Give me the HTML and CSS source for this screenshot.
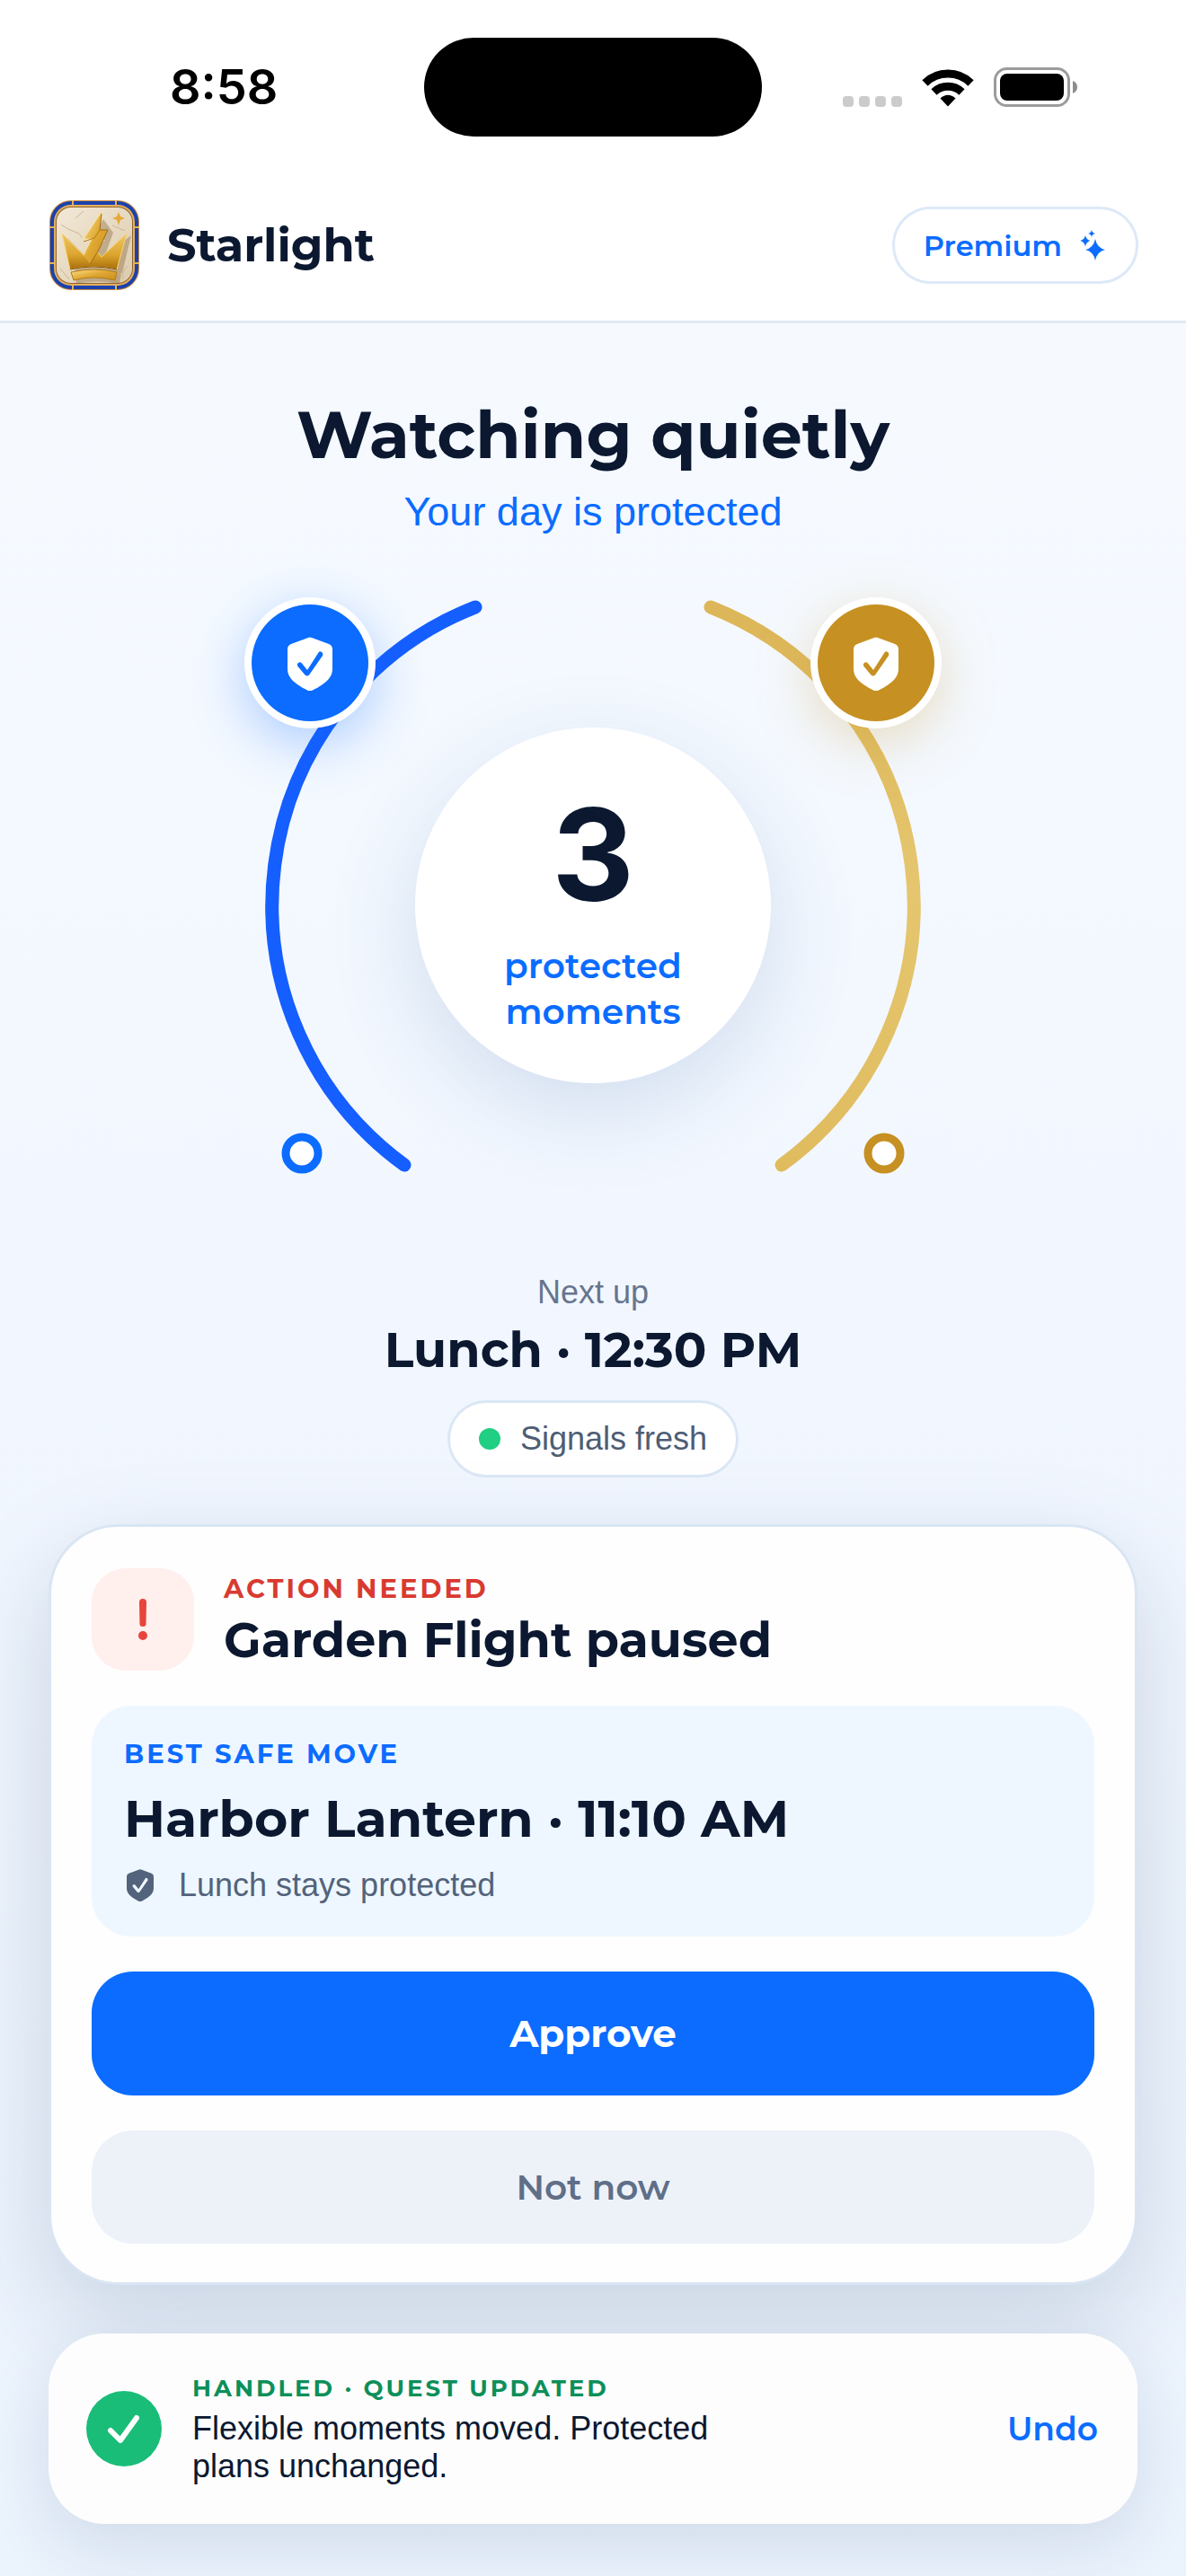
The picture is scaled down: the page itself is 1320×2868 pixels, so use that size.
FILE: index.html
```html
<!DOCTYPE html>
<html lang="en">

<head>
    <meta charset="utf-8">
    <meta name="viewport" content="width=device-width, initial-scale=1">
    <title>Starlight</title>
    <link rel="stylesheet" href="styles.css">
</head>

<body>
    <svg class="sprite" aria-hidden="true">
        <symbol id="shield" viewBox="0 0 50 60">
            <path fill="currentColor" fill-rule="evenodd" d="M23 1q2-1 4 0l19 7q4 1.500 4 6v22c0 11-11 18-23 24q-2 1-4 0C11 54 0 47 0 36V14q0-4.500 4-6z M38 17q-2-1.500-3.500.5L22 37l-6-7.500q-2-2-4-.5t-.5 4l8 9.500q2.500 2 4.500 0L39 21q1-2.500-1-4z" />
        </symbol>
    </svg>

    <div class="status">
        <span class="time">8:58</span>
        <span class="island"></span>
        <div class="signals">
            <svg class="dots" width="66" height="12" viewBox="0 0 66 12" fill="#cbcbcb">
                <rect width="12" height="12" rx="4" />
                <rect x="18" width="12" height="12" rx="4" />
                <rect x="36" width="12" height="12" rx="4" />
                <rect x="54" width="12" height="12" rx="4" />
            </svg>
            <svg width="58" height="43" viewBox="0 0 58 43">
                <path d="M3.500 16.500a36.500 36.500 0 0 1 51 0M13.500 26.500a22.500 22.500 0 0 1 31 0" fill="none" stroke="#000" stroke-width="9" />
                <path d="M29 42.500 20.500 33.500q8.500-7.500 17 0z" />
            </svg>
            <svg width="94" height="44" viewBox="0 0 94 44">
                <rect x="1.500" y="1.500" width="82" height="41" rx="13" fill="none" stroke="#9b9b9b" stroke-width="3" />
                <rect x="7" y="7" width="71" height="30" rx="8" />
                <path d="M88 15q5 2 5 7t-5 7z" fill="#8c8c8c" />
            </svg>
        </div>
    </div>

    <header class="header">
        <svg class="logo" viewBox="0 0 100 100">
            <defs>
                <linearGradient id="gold" x1="0" y1="0" x2="1" y2="1">
                    <stop offset="0" stop-color="#fbe08a" />
                    <stop offset=".5" stop-color="#dfa832" />
                    <stop offset="1" stop-color="#c98c1e" />
                </linearGradient>
                <linearGradient id="crown" x1="0" y1="0" x2="0" y2="1">
                    <stop offset="0" stop-color="#efc765" />
                    <stop offset=".6" stop-color="#dba42c" />
                    <stop offset="1" stop-color="#a86d0b" />
                </linearGradient>
                <linearGradient id="stone" x1="0" y1="0" x2="1" y2="1">
                    <stop offset="0" stop-color="#f3e9d8" />
                    <stop offset="1" stop-color="#dccbad" />
                </linearGradient>
            </defs>
            <rect width="100" height="100" rx="24" fill="#c98d3c" />
            <rect x="1" y="1" width="98" height="98" rx="23" fill="#1b41ad" />
            <rect x="5" y="5" width="90" height="90" rx="19" fill="#e2b062" />
            <rect x="7" y="7" width="86" height="86" rx="17" fill="#94642a" />
            <rect x="8" y="8" width="84" height="84" rx="16" fill="url(#stone)" />
            <path d="M13 27q8 6 15 8t8 7M82 88q-2-9 5-15M12 76l10 12M38 12l-9 8M70 28l14 6" fill="none" stroke="#cbb693" />
            <path d="M26 0v5M74 0v5M26 95v5M74 95v5M0 30h5M0 70h5M95 30h5M95 70h5" stroke="#e3b25a" stroke-width="2" />
            <g fill="#7a5a2c" opacity=".35">
                <path d="m20 42 22 22 20-20-16 2 14-25 11 15-9 25 29-22-10 42q-25 6-52 0z" />
                <path d="M28 82q25-6 52 0l-2 11q-26-5-48 0z" />
            </g>
            <path d="M14 37 38 61l16-3 4 5 28-26-11 40q-26-6-52 0z" fill="url(#crown)" stroke="#f7d477" />
            <path d="M58 13 38 43h9l-9 18 7 10 9-14 11-24h-9z" fill="url(#gold)" />
            <path d="M58 13 38 43h9l-9 18" fill="none" stroke="#fae39b" />
            <path d="M58 15 56 33h9L54 57l-9 14" fill="none" stroke="#a06a10" />
            <path d="M38 46 50 42l6-9" fill="none" stroke="#b37b18" />
            <path d="M23 77q26-6 52 0" fill="none" stroke="#8a570a" />
            <path d="M24 80q26-6 51 0l-2 9q-24-6-46 0z" fill="url(#gold)" stroke="#b47a18" />
            <path d="m77 13 2 5 5 2-5 2-2 6-2-6-5-2 5-2z" fill="#e7a93a" />
        </svg>
        <span class="brand">Starlight</span>
        <button class="premium" type="button">Premium
            <svg width="28" height="34" viewBox="0 0 28 34" fill="currentColor">
                <path d="M17 10q2 10 11 12-9 2-11 12-2-10-11-12 9-2 11-12zM6 6q1 5 5.500 6Q7 13 6 18.500 5 13 0 12q5-1 6-6zM13 0q.6 3.500 4 4-3.400.5-4 4-.6-3.500-4-4 3.400-.5 4-4z" />
            </svg>
        </button>
    </header>

    <main class="main">
        <h1>Watching quietly</h1>
        <p class="subtitle">Your day is protected</p>

        <div class="orbit">
            <svg class="rings" viewBox="0 0 800 710">
                <defs>
                    <linearGradient id="arcGold" x1="0" y1="0" x2="0" y2="1">
                        <stop offset="0" stop-color="#dcb658" />
                        <stop offset=".5" stop-color="#e5c66f" />
                        <stop offset="1" stop-color="#e0bc5f" />
                    </linearGradient>
                </defs>
                <g fill="none" stroke-width="15" stroke-linecap="round">
                    <path d="M269 23A357 357 0 0 0 190 644" stroke="#155eff" />
                    <path d="M531 23A357 357 0 0 1 610 644" stroke="url(#arcGold)" />
                </g>
                <g class="badge blue">
                    <circle class="glow" cx="85" cy="85" r="73" />
                    <circle cx="85" cy="85" r="65" fill="currentColor" />
                    <use href="#shield" x="60" y="56" width="50" height="60" color="#fff" />
                    <circle class="stop" cx="76" cy="631" r="18" />
                </g>
                <g class="badge gold">
                    <circle class="glow" cx="715" cy="85" r="73" />
                    <circle cx="715" cy="85" r="65" fill="currentColor" />
                    <use href="#shield" x="690" y="56" width="50" height="60" color="#fff" />
                    <circle class="stop" cx="724" cy="631" r="18" />
                </g>
            </svg>
            <div class="count">
                <strong>3</strong>
                <span>protected<br>moments</span>
            </div>
        </div>

        <section class="next">
            <p class="next-label">Next up</p>
            <h2>Lunch · 12:30 PM</h2>
            <p class="fresh"><i></i>Signals fresh</p>
        </section>

        <section class="card">
            <div class="alert">
                <span class="alert-icon">
                    <svg width="12" height="46" viewBox="0 0 12 46" fill="currentColor">
                        <path d="M2 4q0-4 4-4t4 4l-.5 24q0 3-3.500 3t-3.500-3z" />
                        <circle cx="6" cy="41" r="5" />
                    </svg>
                </span>
                <div class="alert-text">
                    <p class="label red">ACTION NEEDED</p>
                    <h2>Garden Flight paused</h2>
                </div>
            </div>
            <div class="move">
                <p class="label">BEST SAFE MOVE</p>
                <h3>Harbor Lantern · 11:10 AM</h3>
                <p class="note"><svg width="30" height="36"><use href="#shield" /></svg>Lunch stays protected</p>
            </div>
            <button class="approve" type="button">Approve</button>
            <button class="later" type="button">Not now</button>
        </section>

        <section class="toast">
            <svg class="done" viewBox="0 0 84 84">
                <circle cx="42" cy="42" r="42" fill="#19bd78" />
                <path d="m27 44 11 11 18-25" fill="none" stroke="#fff" stroke-width="6" stroke-linecap="round" stroke-linejoin="round" />
            </svg>
            <div class="toast-text">
                <p class="label green">HANDLED · QUEST UPDATED</p>
                <p>Flexible moments moved. Protected plans unchanged.</p>
            </div>
            <button class="undo" type="button">Undo</button>
        </section>
    </main>
</body>

</html>
```

FILE: styles.css
```css
* {
    box-sizing: border-box;
}

body {
    margin: 0;
    min-height: 100vh;
    font-family: "Liberation Sans", Arial, sans-serif;
    font-size: 36px;
    line-height: 44px;
    color: #0b1830;
    background: linear-gradient(180deg, #f7fbff 0, #f2f7ff 50%, #ebf3fd 100%);
}

h1,
h2,
h3,
p {
    margin: 0;
}

button {
    border: 0;
    padding: 0;
    background: none;
    cursor: pointer;
}

h1,
h2,
h3,
button,
.brand,
.count,
.label {
    font-family: Montserrat, Inter, sans-serif;
    font-weight: 700;
}

svg {
    flex: none;
}

.sprite {
    display: none;
}

.status {
    display: grid;
    grid-template-columns: 1fr 376px 1fr;
    align-items: center;
    height: 190px;
    padding: 4px 120px 0;
    background: #fff;
}

.time {
    padding-left: 69px;
    font-family: Inter, sans-serif;
    font-size: 54px;
    font-weight: 600;
    color: #000;
}

.island {
    height: 110px;
    border-radius: 55px;
    background: #000;
}

.signals {
    display: flex;
    justify-content: flex-end;
    align-items: flex-end;
    gap: 22px;
}

.header {
    display: flex;
    align-items: center;
    padding: 33px 53px 34px 55px;
    background: #fff;
    border-bottom: 3px solid #e1e9f3;
}

.logo {
    width: 100px;
    height: 100px;
}

.brand {
    margin-left: 31px;
    font-size: 51px;
}

.premium {
    display: flex;
    align-items: center;
    gap: 20px;
    height: 86px;
    margin-left: auto;
    padding: 0 34px 0 32px;
    border: 3px solid #dde9f8;
    border-radius: 43px;
    font-size: 32px;
    font-weight: 600;
    color: #0b6cff;
}

.main {
    display: flex;
    flex-direction: column;
    align-items: center;
    padding: 78px 54px 50px;
}

h1 {
    font-size: 73px;
    line-height: 92px;
}

.subtitle {
    margin-top: 12px;
    font-size: 45px;
    line-height: 56px;
    color: #0b6cff;
}

/* rings and counter share one grid cell */
.orbit {
    display: grid;
    place-items: center;
    width: 100%;
    max-width: 800px;
    margin: 55px 0 54px;
}

.rings,
.count {
    grid-area: 1 / 1;
}

.rings {
    width: 100%;
    overflow: visible;
}

.badge.blue {
    color: #0b6cff;
}

.badge.gold {
    color: #c69022;
}

.glow {
    fill: #fff;
}

.blue .glow {
    filter: drop-shadow(0 16px 30px rgba(11, 108, 255, 0.32));
}

.gold .glow {
    filter: drop-shadow(0 16px 30px rgba(198, 144, 34, 0.28));
}

.stop {
    fill: #fff;
    stroke: currentColor;
    stroke-width: 9;
}

.count {
    display: flex;
    flex-direction: column;
    align-items: center;
    justify-content: center;
    gap: 39px;
    width: 396px;
    height: 396px;
    padding-top: 26px;
    border-radius: 50%;
    background: #fff;
    box-shadow: 0 30px 100px rgba(35, 85, 150, 0.16);
    text-align: center;
}

.count strong {
    font-family: Inter, sans-serif;
    font-size: 142px;
    font-weight: 700;
    line-height: 120px;
}

.count span {
    font-size: 39px;
    font-weight: 600;
    line-height: 51px;
    color: #0b6cff;
}

.next {
    display: flex;
    flex-direction: column;
    align-items: center;
}

.next-label {
    color: #66758d;
}

.next h2 {
    margin: 10px 0 24px;
    font-size: 54px;
    line-height: 64px;
}

.fresh {
    display: flex;
    align-items: center;
    gap: 22px;
    height: 86px;
    padding: 0 32px;
    border: 3px solid #dbe7f5;
    border-radius: 43px;
    background: #fff;
    color: #4e5d75;
}

.fresh i {
    width: 24px;
    height: 24px;
    border-radius: 50%;
    background: #20cf83;
}

.card {
    display: flex;
    flex-direction: column;
    gap: 39px;
    width: 100%;
    margin: 52px 0 54px;
    padding: 46px 45px 43px;
    border: 3px solid #d9e5f3;
    border-radius: 78px;
    background: #fefefe;
    box-shadow: 0 36px 110px rgba(20, 50, 90, 0.17);
}

.alert {
    display: flex;
    align-items: center;
    gap: 33px;
}

.alert-icon {
    display: grid;
    place-items: center;
    width: 114px;
    height: 114px;
    border-radius: 38px;
    background: #ffefed;
    color: #e7443c;
}

.alert-text {
    display: flex;
    flex-direction: column;
    gap: 9px;
}

.alert h2 {
    font-size: 54px;
    line-height: 60px;
}

.label {
    font-size: 29px;
    line-height: 36px;
    letter-spacing: 3px;
    color: #0b6cff;
}

.label.red {
    color: #d93a30;
}

.label.green {
    font-size: 26px;
    color: #0d8f58;
}

.move {
    padding: 36px 36px 35px;
    border-radius: 44px;
    background: #eef7ff;
}

.move h3 {
    margin: 20px 0 18px;
    font-size: 57px;
    line-height: 68px;
}

.note {
    display: flex;
    align-items: center;
    gap: 28px;
    padding-left: 3px;
    color: #53637b;
}

.approve,
.later {
    border-radius: 46px;
}

.approve {
    height: 138px;
    font-size: 42px;
    color: #fff;
    background: #0b6cff;
}

.later {
    height: 126px;
    font-size: 39px;
    font-weight: 600;
    color: #5f6f88;
    background: #edf2f9;
}

.toast {
    display: flex;
    align-items: center;
    gap: 34px;
    width: 100%;
    min-height: 212px;
    padding: 24px 44px 24px 42px;
    border-radius: 62px;
    background: #fdfdfe;
    box-shadow: 0 24px 72px rgba(20, 50, 90, 0.12);
}

.done {
    width: 84px;
    height: 84px;
}

.toast-text {
    display: flex;
    flex-direction: column;
    gap: 6px;
    max-width: 620px;
    line-height: 42px;
}

.undo {
    margin-left: auto;
    font-size: 36px;
    font-weight: 600;
    color: #0b6cff;
}
```
